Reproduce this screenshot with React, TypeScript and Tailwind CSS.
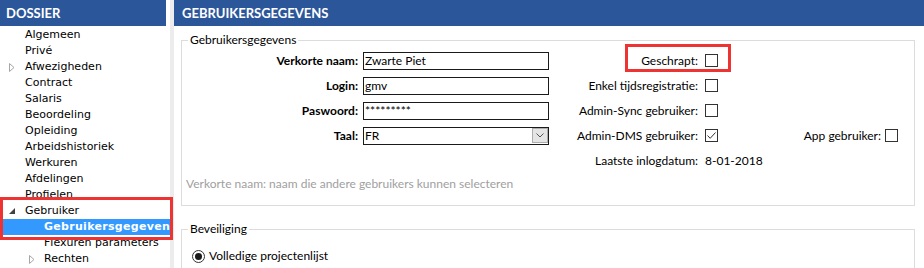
import React from "react";

const BLUE = "bg-[#2b579a]";

type TreeItem = {
  label: string;
  level?: 1 | 2;
  toggle?: "open" | "closed";
  selected?: boolean;
};

const tree: TreeItem[] = [
  { label: "Algemeen" },
  { label: "Privé" },
  { label: "Afwezigheden", toggle: "closed" },
  { label: "Contract" },
  { label: "Salaris" },
  { label: "Beoordeling" },
  { label: "Opleiding" },
  { label: "Arbeidshistoriek" },
  { label: "Werkuren" },
  { label: "Afdelingen" },
  { label: "Profielen" },
  { label: "Gebruiker", toggle: "open" },
  { label: "Gebruikersgegevens", level: 2, selected: true },
  { label: "Flexuren parameters", level: 2 },
  { label: "Rechten", level: 2, toggle: "closed" },
];

function Toggle({ kind }: { kind?: "open" | "closed" }) {
  if (kind === "closed") {
    return (
      <svg width="6" height="9" viewBox="0 0 6 9">
        <path d="M0.5 0.5 L5 4.5 L0.5 8.5 Z" fill="white" stroke="#a6a6a6" />
      </svg>
    );
  }
  if (kind === "open") {
    return (
      <svg width="6" height="6" viewBox="0 0 6 6">
        <path d="M6 0 L6 6 L0 6 Z" fill="#404040" />
      </svg>
    );
  }
  return null;
}

function Sidebar() {
  return (
    <div className="relative flex">
      <aside className="w-[170px] overflow-hidden bg-white">
        <div className="flex h-[26px] pr-[4px]">
          <div className={`flex-1 ${BLUE} pl-[6px] font-['Lato'] text-[13px] leading-[26px] font-bold text-white`}>
            DOSSIER
          </div>
        </div>
        <ul className="pt-[1px] font-['DejaVu_Sans',sans-serif] text-[11px] text-black">
          {tree.map((item) => (
            <li
              key={item.label}
              className={`flex h-[16px] items-center overflow-hidden whitespace-nowrap ${
                item.level === 2 ? "pl-[28px]" : "pl-[9px]"
              } ${item.selected ? "bg-[#3399ff] font-bold tracking-[0.3px] text-white" : ""}`}
            >
              <span className={`flex w-[16px] shrink-0 items-center ${item.level === 2 ? "pl-[1px]" : ""}`}>
                <Toggle kind={item.toggle} />
              </span>
              <span className="shrink-0">{item.label}</span>
            </li>
          ))}
        </ul>
      </aside>
      <div className="w-[4px] bg-[#ececec]" />
      <span className="pointer-events-none absolute top-[197px] left-0 h-[43px] w-[173px] border-[3px] border-[#ee3333]" />
    </div>
  );
}

function Box({ checked }: { checked?: boolean }) {
  return (
    <span className="flex h-[13px] w-[13px] items-center justify-center border border-[#333333] bg-white">
      {checked && (
        <svg width="11" height="11" viewBox="0 0 11 11">
          <path d="M1.5 5.5 L4.2 8.3 L9.5 2.5" fill="none" stroke="#333333" strokeWidth="1" />
        </svg>
      )}
    </span>
  );
}

function TextBox({ value, select }: { value: string; select?: boolean }) {
  return (
    <div className="flex h-[18px] w-[186px] items-center border border-[#1a1a1a] bg-white">
      <span className="flex-1 pl-[1px] leading-[16px]">{value}</span>
      {select && (
        <span className="flex h-[15px] w-[16px] items-center justify-center border border-[#adadad] bg-[#e5e5e5]">
          <svg width="8" height="5" viewBox="0 0 8 5">
            <path d="M0.5 0.5 L4 4 L7.5 0.5" fill="none" stroke="#555555" />
          </svg>
        </span>
      )}
    </div>
  );
}

function Label({ children }: { children: React.ReactNode }) {
  return <div className="w-[181px] pr-[5px] text-right font-bold">{children}</div>;
}

function RightCell({
  label,
  children,
  flagged,
}: {
  label: string;
  children: React.ReactNode;
  flagged?: boolean;
}) {
  return (
    <div className="relative flex w-[169px] items-center">
      <span className="flex-1 pr-[7px] text-right">{label}</span>
      <span className="w-[13px]">{children}</span>
      {flagged && (
        <span className="pointer-events-none absolute -top-[8px] -right-[13px] -bottom-[2px] left-[76px] border-[3px] border-[#ee3333]" />
      )}
    </div>
  );
}

function UserForm() {
  return (
    <fieldset className="w-[734px] border border-[#dcdcdc] pb-[13px]">
      <legend className="ml-[6px] px-[2px] leading-[16px]">Gebruikersgegevens</legend>
      <div className="flex h-[25px] items-center">
        <Label>Verkorte naam:</Label>
        <TextBox value="Zwarte Piet" />
        <RightCell label="Geschrapt:" flagged>
          <Box />
        </RightCell>
      </div>
      <div className="flex h-[25px] items-center">
        <Label>Login:</Label>
        <TextBox value="gmv" />
        <RightCell label="Enkel tijdsregistratie:">
          <Box />
        </RightCell>
      </div>
      <div className="flex h-[25px] items-center">
        <Label>Paswoord:</Label>
        <TextBox value="*********" />
        <RightCell label="Admin-Sync gebruiker:">
          <Box />
        </RightCell>
      </div>
      <div className="flex h-[25px] items-center">
        <Label>Taal:</Label>
        <TextBox value="FR" select />
        <RightCell label="Admin-DMS gebruiker:">
          <Box checked />
        </RightCell>
        <div className="flex w-[180px] items-center">
          <span className="flex-1 pr-[4px] text-right">App gebruiker:</span>
          <Box />
        </div>
      </div>
      <div className="flex h-[25px] items-center">
        <div className="w-[367px]" />
        <div className="flex w-[156px] items-center">
          <span className="flex-1 pr-[7px] text-right">Laatste inlogdatum:</span>
        </div>
        <span>8-01-2018</span>
      </div>
      <p className="mt-[3px] pl-[4px] leading-[16px] text-[#a0a0a0]">
        Verkorte naam: naam die andere gebruikers kunnen selecteren
      </p>
    </fieldset>
  );
}

function Security() {
  return (
    <fieldset className="mt-[15px] h-[60px] w-[734px] border border-[#dcdcdc]">
      <legend className="ml-[6px] px-[2px] leading-[16px]">Beveiliging</legend>
      <label className="mt-[11px] flex h-[16px] items-center pl-[10px]">
        <span className="flex h-[13px] w-[13px] items-center justify-center rounded-full border border-[#333333] bg-white">
          <span className="h-[7px] w-[7px] rounded-full bg-[#1a1a1a]" />
        </span>
        <span className="pl-[4px]">Volledige projectenlijst</span>
      </label>
    </fieldset>
  );
}

export default function App() {
  return (
    <div className="flex h-[268px] w-[924px] overflow-hidden bg-white">
      <Sidebar />
      <main className="flex-1 font-['Lato',sans-serif] text-[12px] text-black">
        <div className={`h-[26px] ${BLUE} pl-[8px] text-[13px] leading-[26px] font-bold text-white`}>
          GEBRUIKERSGEGEVENS
        </div>
        <div className="pt-[6px] pl-[7px]">
          <UserForm />
          <Security />
        </div>
      </main>
    </div>
  );
}
